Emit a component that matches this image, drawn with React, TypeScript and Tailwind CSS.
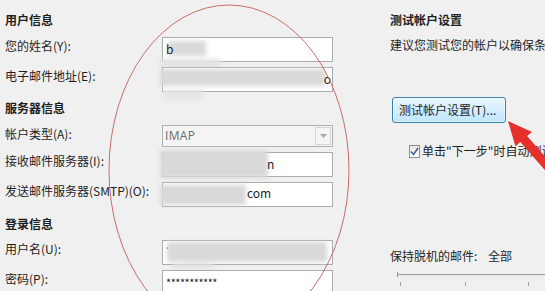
import React from "react";

const font = { fontFamily: '"Noto Sans CJK SC", "Noto Sans", sans-serif' };

function Blur({ className }: { className: string }) {
  return <div className={`absolute bg-[#d9d9d9] blur-[2px] ${className}`} />;
}

function Field({
  label,
  children,
  h = "h-[25px]",
}: {
  label: string;
  children?: React.ReactNode;
  h?: string;
}) {
  return (
    <div className="flex items-start">
      <div className="w-[157px] pt-[1px] text-[12px] leading-[16px] text-[#1e1e1e] whitespace-nowrap">{label}</div>
      <div className={`relative w-[171px] ${h} bg-white border border-[#a9abae] text-[12px] leading-[22px] pl-[3px] overflow-visible`}>
        {children}
      </div>
    </div>
  );
}

export default function App() {
  return (
    <div className="relative w-[545px] h-[291px] overflow-hidden bg-[#f0f0f0] text-[#1e1e1e]" style={font}>
      <div className="flex">
        {/* LEFT: account form */}
        <div className="w-[333px] pl-[5px] pt-[12px] flex flex-col">
          <div className="h-[16px] text-[12px] leading-[16px] font-bold">用户信息</div>

          <div className="mt-[9px] flex flex-col gap-[5px]">
            <Field label="您的姓名(Y):">
              <span className="relative z-10">b</span>
              <Blur className="left-[5px] top-[3px] w-[38px] h-[15px]" />
              <Blur className="left-[-3px] top-[21px] w-[62px] h-[9px] bg-[#e4e4e4]" />
            </Field>
            <Field label="电子邮件地址(E):">
              <Blur className="left-[-3px] top-[1px] w-[165px] h-[17px]" />
              <span className="absolute right-[1px] top-0 text-[12px] leading-[22px]">o</span>
              <Blur className="left-[0px] top-[22px] w-[40px] h-[10px] bg-[#e6e6e6]" />
            </Field>
          </div>

          <div className="mt-[8px] h-[16px] text-[12px] leading-[16px] font-bold">服务器信息</div>

          <div className="mt-[9px] flex flex-col gap-[5px]">
            <div className="flex items-start">
              <div className="w-[157px] pt-[1px] text-[12px] leading-[16px] whitespace-nowrap">帐户类型(A):</div>
              <div className="w-[171px] h-[22px] flex items-center justify-between bg-[#f4f4f4] border border-[#adb2b5]">
                <span className="pl-[2px] text-[12px] text-[#6d6d6d] tracking-[0.3px]" style={{ fontFamily: '"Open Sans", "Noto Sans", sans-serif' }}>IMAP</span>
                <div className="w-[16px] h-[18px] mr-[1px] flex items-center justify-center border border-[#d5d5d5] bg-[#f4f4f4]">
                  <svg width="7" height="4" viewBox="0 0 7 4">
                    <path d="M0 0 L7 0 L3.5 4 Z" fill="#a8a8a8" />
                  </svg>
                </div>
              </div>
            </div>
            <Field label="接收邮件服务器(I):">
              <Blur className="left-[-3px] top-[-3px] w-[108px] h-[28px]" />
              <span className="absolute left-[104px] top-0 text-[12px] leading-[22px]">n</span>
            </Field>
            <Field label="发送邮件服务器(SMTP)(O):">
              <Blur className="left-[-3px] top-[2px] w-[86px] h-[20px]" />
              <span className="absolute left-[84px] top-[-1px] text-[12px] leading-[22px]">com</span>
            </Field>
          </div>

          <div className="mt-[9px] h-[16px] text-[12px] leading-[16px] font-bold">登录信息</div>

          <div className="mt-[8px] flex flex-col gap-[5px]">
            <Field label="用户名(U):">
              <span className="absolute left-[3px] top-[-8px] text-[12px]">.</span>
              <Blur className="left-[4px] top-[1px] w-[160px] h-[20px]" />
              <Blur className="left-[10px] top-[22px] w-[40px] h-[6px] bg-[#e2e2e2]" />
            </Field>
            <Field label="密码(P):">
              <span className="text-[11px] leading-[18px] tracking-[-0.5px]">***********</span>
            </Field>
          </div>
        </div>

        {/* RIGHT: test settings */}
        <div className="ml-[57px] w-[155px] pt-[12px] flex flex-col overflow-hidden whitespace-nowrap">
          <div className="h-[16px] text-[12px] leading-[16px] font-bold">测试帐户设置</div>
          <div className="mt-[9px] h-[16px] text-[12px] leading-[16px]">建议您测试您的帐户以确保条目正确无误。</div>

          <button className="mt-[44px] ml-[2px] w-[114px] h-[26px] rounded-[3px] border border-[#3c7fb1] bg-gradient-to-b from-[#eaf6fd] to-[#bee6fd] shadow-[inset_0_0_0_1px_#ffffff80] text-[12px] leading-[22px] text-left pl-[6px]">
            测试帐户设置(T)...
          </button>

          <div className="mt-[20px] ml-[19px] flex items-center gap-[2px]">
            <div className="w-[13px] h-[13px] border border-[#8f8f8f] bg-gradient-to-b from-[#e6e6e6] to-[#ffffff] flex items-center justify-center">
              <svg width="9" height="9" viewBox="0 0 9 9">
                <path d="M1 4.5 L3.5 7.5 L8 1" fill="none" stroke="#4a5f97" strokeWidth="1.6" />
              </svg>
            </div>
            <span className="text-[12px] leading-[16px]">单击"下一步"时自动测试帐户设置(S)</span>
          </div>

          <div className="mt-[89px] flex text-[12px] leading-[16px]">
            <span className="w-[98px]">保持脱机的邮件:</span>
            <span>全部</span>
          </div>

          <div className="mt-[5px] ml-[7px] relative h-[16px]">
            <div className="absolute left-0 right-0 top-[5px] h-[1px] bg-[#a0a0a0]" />
            <div className="absolute left-0 right-0 top-[6px] h-[1px] bg-[#e6e6e6]" />
            <div className="absolute left-0 top-[3px] w-[1px] h-[5px] bg-[#909090]" />
            <div className="absolute left-[3px] top-[13px] w-[1px] h-[4px] bg-[#a0a0a0]" />
            <div className="absolute left-[68px] top-[13px] w-[1px] h-[4px] bg-[#a0a0a0]" />
            <div className="absolute left-[131px] top-[13px] w-[1px] h-[4px] bg-[#a0a0a0]" />
          </div>
        </div>
      </div>

      {/* ANNOTATIONS: red ellipse + arrow drawn over the dialog */}
      <svg className="absolute inset-0 pointer-events-none" width="545" height="291" viewBox="0 0 545 291">
        <ellipse cx="229" cy="170" rx="120" ry="165" fill="none" stroke="#c86d6b" strokeWidth="1" />
        <polygon
          points="508,121 532,131.9 527.1,136.1 563.9,178.1 557.1,184 520.3,142 515.4,146.3"
          fill="#e5302b"
        />
      </svg>
    </div>
  );
}
